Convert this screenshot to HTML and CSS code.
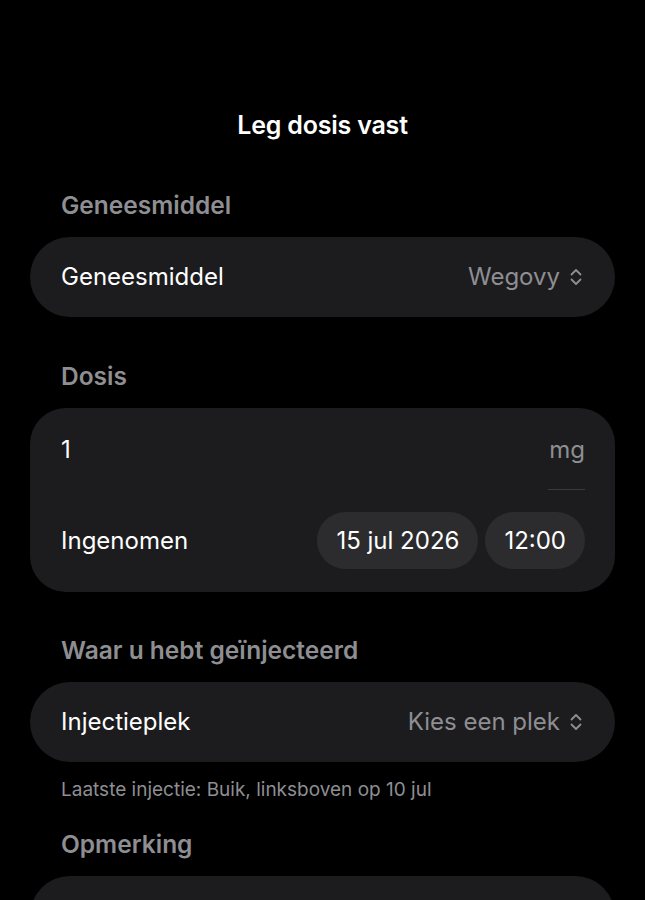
FILE: index.html
```html
<!DOCTYPE html>
<html lang="nl">
<head>
<meta charset="utf-8">
<title>Leg dosis vast</title>
<link rel="stylesheet" href="styles.css">
</head>
<body>
<div class="screen">
  <h1 class="title">Leg dosis vast</h1>

  <h2 class="section">Geneesmiddel</h2>
  <div class="card row">
    <span class="label">Geneesmiddel</span>
    <span class="value">Wegovy
      <svg class="chev" viewBox="0 0 14 20" width="14" height="20" aria-hidden="true"><path d="M2.5 7.5 L7 3 L11.5 7.5 M2.5 12.5 L7 17 L11.5 12.5" fill="none" stroke="currentColor" stroke-width="1.8" stroke-linecap="round" stroke-linejoin="round"/></svg>
    </span>
  </div>

  <h2 class="section">Dosis</h2>
  <div class="card dose">
    <div class="dose-row">
      <span class="label">1</span>
      <span class="unit">mg</span>
    </div>
    <div class="taken-row">
      <span class="label">Ingenomen</span>
      <div class="pills">
        <span class="pill">15 jul 2026</span>
        <span class="pill">12:00</span>
      </div>
    </div>
  </div>

  <h2 class="section section-tight">Waar u hebt geïnjecteerd</h2>
  <div class="card row">
    <span class="label">Injectieplek</span>
    <span class="value">Kies een plek
      <svg class="chev" viewBox="0 0 14 20" width="14" height="20" aria-hidden="true"><path d="M2.5 7.5 L7 3 L11.5 7.5 M2.5 12.5 L7 17 L11.5 12.5" fill="none" stroke="currentColor" stroke-width="1.8" stroke-linecap="round" stroke-linejoin="round"/></svg>
    </span>
  </div>
  <p class="note">Laatste injectie: Buik, linksboven op 10 jul</p>

  <h2 class="section section-after-note">Opmerking</h2>
  <div class="card notes"></div>
</div>
</body>
</html>
```
FILE: styles.css
```css
* { box-sizing: border-box; }
html, body {
  margin: 0;
  padding: 0;
  background: #000;
}
body {
  font-family: Inter, "Noto Sans", "Liberation Sans", sans-serif;
  color: #fff;
  overflow: hidden;
}
.screen {
  padding: 110px 30px 0 30px;
  display: flex;
  flex-direction: column;
}
.title {
  margin: 0;
  font-size: 25px;
  line-height: 30px;
  font-weight: 600;
  text-align: center;
  letter-spacing: -0.2px;
}
.section {
  margin: 45px 0 18px 0;
  padding-left: 31px;
  font-size: 24.5px;
  line-height: 28px;
  font-weight: 600;
  color: #8e8e93;
}
.title + .section { margin-top: 51px; }
.section-tight { margin-top: 44px; }
.section-after-note { margin-top: 29px; }
.card {
  background: #1c1c1e;
  border-radius: 40px;
}
.row {
  height: 80px;
  display: flex;
  align-items: center;
  justify-content: space-between;
  padding: 0 32px 0 31px;
}
.label {
  font-size: 24px;
  line-height: 28px;
  color: #fff;
}
.value {
  display: flex;
  align-items: center;
  gap: 9px;
  font-size: 24px;
  line-height: 28px;
  color: #8e8e93;
}
.chev { display: block; color: #8e8e93; }
.dose {
  border-radius: 36px;
  padding: 23px 30px 23px 31px;
  display: flex;
  flex-direction: column;
  gap: 22px;
}
.dose-row {
  display: flex;
  justify-content: space-between;
  align-items: flex-start;
  height: 59px;
  padding-top: 5px;
}
.unit {
  font-size: 24px;
  line-height: 28px;
  color: #8e8e93;
  width: 37px;
  height: 54px;
  text-align: right;
  border-bottom: 1px solid #3a3a3c;
}
.taken-row {
  display: flex;
  justify-content: space-between;
  align-items: center;
}
.pills {
  display: flex;
  gap: 7px;
}
.pill {
  height: 57px;
  display: flex;
  align-items: center;
  padding: 0 19px;
  border-radius: 29px;
  background: #2c2c2e;
  font-size: 24px;
  color: #fff;
}
.note {
  margin: 17px 0 0 0;
  padding-left: 31px;
  font-size: 19px;
  line-height: 22px;
  color: #8e8e93;
}
.notes {
  height: 140px;
}
```
